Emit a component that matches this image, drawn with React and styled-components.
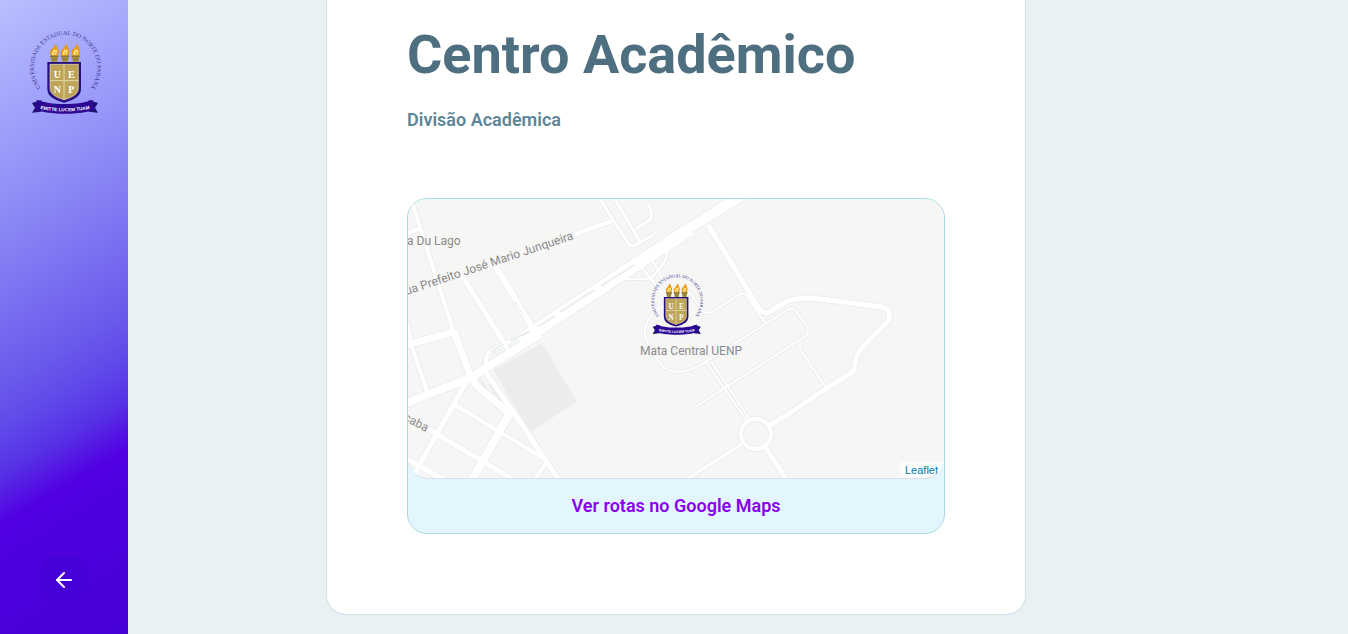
import React from "react";
import styled, { createGlobalStyle } from "styled-components";
import { FiArrowLeft } from "react-icons/fi";

const GlobalStyle = createGlobalStyle`
  * { box-sizing: border-box; margin: 0; padding: 0; }
  body {
    background: #e9f1f4;
    color: #5c8599;
    font-family: Roboto, "Liberation Sans", sans-serif;
    font-weight: 600;
    font-size: 18px;
  }
`;

const Page = styled.div`
  display: grid;
  grid-template-columns: 128px minmax(0, 1fr);
  min-height: 100vh;
`;

const Sidebar = styled.aside`
  display: flex;
  flex-direction: column;
  align-items: center;
  justify-content: space-between;
  padding: 28px 24px 30px;
  background: linear-gradient(
    329.54deg,
    #4600d4 0%,
    #5200e2 26%,
    #5631e5 33%,
    #5f48e9 39%,
    #6b5bec 46%,
    #8e8ef7 71%,
    #babfff 100%
  );
`;

const BackButton = styled.button`
  display: flex;
  align-items: center;
  justify-content: center;
  width: 48px;
  height: 48px;
  border: 0;
  border-radius: 16px;
  background: #4700d6;
  color: #fff;
  cursor: pointer;
`;

const Main = styled.main`
  padding: 0 124px 19px 0;
`;

const Card = styled.article`
  width: 100%;
  max-width: 700px;
  margin: 0 auto;
  padding: 28px 80px 80px;
  background: #fff;
  border: 1px solid #d3e2e5;
  border-top: 0;
  border-radius: 0 0 20px 20px;
`;

const Title = styled.h1`
  color: #4d6f80;
  font-size: 54px;
  line-height: 54px;
  font-weight: 700;
`;

const Description = styled.p`
  margin-top: 24px;
  line-height: 28px;
`;

const MapPanel = styled.section`
  margin-top: 64px;
  background: #e3f6fd;
  border: 1px solid #a9dce4;
  border-radius: 20px;
  overflow: hidden;
`;

const MapView = styled.div`
  position: relative;
  height: 280px;
  overflow: hidden;
  background: #f6f6f5;
  border-bottom: 1px solid #dddff0;
  border-radius: 0 0 20px 20px;
`;

const MapDrawing = styled.svg`
  display: block;
  width: 100%;
  height: 100%;
`;

const Marker = styled.div`
  position: absolute;
  top: 73px;
  left: 50%;
  transform: translateX(-50%);
`;

const Attribution = styled.div`
  position: absolute;
  right: 0;
  bottom: 0;
  padding: 0 6px 0 5px;
  background: rgba(255, 255, 255, 0.7);
  font: 11px/16px "Liberation Sans", Arial, sans-serif;

  a { color: #0078a8; text-decoration: none; }
`;

const MapFooter = styled.footer`
  padding: 16px 0 17px;
  text-align: center;
  line-height: 21px;

  a { color: #8800ee; text-decoration: none; }
`;

const CrestSvg = styled.svg`
  display: block;
  flex: none;
`;

function Crest({ id, width, height }) {
  const torches = [163, 195, 227];
  return (
    <CrestSvg width={width} height={height} viewBox="81 84 222 258" role="img" aria-label="UENP">
      <path id={id} d="M134 276 A95 98 0 1 1 260 276" fill="none" />
      <text fontFamily="Liberation Serif, serif" fontSize="18" fontWeight="400" fill="#3d3892" textAnchor="middle">
        <textPath href={`#${id}`} startOffset="50%">UNIVERSIDADE ESTADUAL DO NORTE DO PARANÁ</textPath>
      </text>
      {torches.map((x) => (
        <g key={x} transform={`translate(${x} 0)`}>
          <path d="M-9 186 L-9 177 L-12 171 L-12 165 H12 V171 L9 177 V186 Z" fill="#a8923f" />
          <path d="M-12 170 H12 M-9 178 H9" stroke="#6f6330" strokeWidth="2" />
          <path d="M-10 166 C-17 154 -8 148 -4 143 C0 139 2 136 2 131 C8 135 8 140 9 144 C15 150 14 159 9 166 Z" fill="#e99a16" />
          <path d="M-6 165 C-10 156 -3 153 0 146 C2 151 4 152 7 148 C9 156 7 161 4 165 Z" fill="#ffe785" />
          <path d="M-2 164 C-3 158 1 157 2 153 C5 158 4 161 1 164 Z" fill="#f2b32b" />
        </g>
      ))}
      <path d="M142 186 H243 V266 C243 287 226 299 192 308 C159 299 142 287 142 266 Z" fill="#27107f" />
      <path d="M150 193 H235 V264 C235 281 221 291 192 299 C164 291 150 281 150 264 Z" fill="#bda458" stroke="#eee3b8" strokeWidth="2" />
      <path d="M192 193 V299 M150 242 H235" stroke="#e6d9a4" strokeWidth="3" />
      <g fill="#fff" fontFamily="Liberation Serif, serif" fontSize="30" fontWeight="700" textAnchor="middle">
        <text x="172" y="234">U</text>
        <text x="214" y="234">E</text>
        <text x="172" y="279">N</text>
        <text x="214" y="279">P</text>
      </g>
      <path d="M96 309 L124 300 L124 335 L96 338 L105 323 Z M294 309 L266 300 L266 335 L294 338 L285 323 Z" fill="#211073" />
      <path d="M111 299 C145 316 242 316 278 299 L284 328 C246 346 145 346 105 328 Z" fill="#2c0794" />
      <path id={`${id}-motto`} d="M108 322 C145 338 244 338 282 322" fill="none" />
      <text fontFamily="Liberation Sans, sans-serif" fontSize="14" fontWeight="700" fill="#fff" textAnchor="middle">
        <textPath href={`#${id}-motto`} startOffset="50%">EMITTE LUCEM TUAM</textPath>
      </text>
    </CrestSvg>
  );
}

const roads = [
  [3, "M600 199 L613 220 L628 243 Q631 247 636 245 L653 235"],
  [3, "M615 199 L640 242"],
  [3, "M648 204 Q654 213 650 220 L635 229"],
  [2, "M667 250 Q667 262 658 270 Q653 279 645 279 L625 279"],
  [2, "M642 268 L660 290"],
  [2, "M653 262 Q657 268 668 292"],
  [2, "M695 407 L806 336 Q809 333 808 328 L795 310 Q793 308 789 309 L707 361 Q675 382 660 363 Q645 344 645 333 Q645 318 660 308 L690 293 L703 311 Q708 315 714 311 L740 294 Q744 292 747 296 L765 323"],
  [2, "M800 342 Q799 348 802 352 L826 388"],
  [2, "M706 362 L747 421"],
  [2, "M711 361 L750 420"],
  [3, "M742 444 L687 479"],
  [5, "M708 225 L760 310 Q764 314 769 312 L786 302 Q792 298 812 298 L882 307 Q893 310 888 321 L860 350 Q857 353 856 360 L853 372 L827 388 L790 413 L770 425"],
  [5, "M766 448 L786 479"],
  [4, "M407 234 L420 228"],
  [4, "M411 199 L454 333"],
  [4, "M573 235 L612 221"],
  [5, "M463 277 L506 346"],
  [6, "M493 262 L533 329"],
  [4, "M404 310 L412 347 L428 394"],
  [7, "M403 346 L454 332"],
  [7, "M454 331 L471 378"],
  [4, "M500 336 L508 350"],
  [4, "M486 366 Q485 356 490 352 L524 334"],
  [7, "M470 377 L480 389 L512 415"],
  [5, "M483 369 L515 414 L558 479"],
  [8, "M510 413 L472 480"],
  [5, "M468 379 L412 478"],
  [4, "M455 405 L545 459"],
  [5, "M425 427 L514 480"],
  [5, "M404 457 L444 480"],
  [4, "M547 462 L534 480"],
  [8, "M404 404 L472 377 L540 334"],
  [13, "M520 341 L690 229"],
  [10, "M680 234 L752 189"],
];

function CampusMap() {
  return (
    <MapDrawing viewBox="408 199 536 279" preserveAspectRatio="xMidYMid slice" aria-hidden="true">
      <path d="M542 343 L577 402 L530 432 L493 370 Z" fill="#ebedec" />
      <g fill="none" stroke="#eaefee" strokeLinejoin="round">
        {roads.map(([w, d]) => <path key={d} d={d} strokeWidth={w + 2} />)}
        <circle cx="756" cy="434" r="15" strokeWidth="6" />
      </g>
      <g fill="none" stroke="#fff" strokeLinejoin="round">
        {roads.map(([w, d]) => <path key={d} d={d} strokeWidth={w} />)}
        <circle cx="756" cy="434" r="15" strokeWidth="4" />
      </g>
      <g fill="none" stroke="#e8edec">
        <path d="M491 352 L504 344 M510 341 L530 331 M537 327 L555 316 M560 312 L594 290 M601 286 L634 265" strokeWidth="2" />
        <path d="M515 301 L523 315" />
        <path d="M479 378 L487 389 M489 384 L500 400" strokeWidth="2" />
      </g>
      <g fill="#8a8a8a" stroke="#f6f6f5" strokeWidth="3" paintOrder="stroke" fontFamily="Roboto, sans-serif" fontSize="12" fontWeight="400">
        <text x="407" y="245">a Du Lago</text>
        <text x="574" y="239" textAnchor="end" transform="rotate(-18.5 574 239)">ua Prefeito José Mario Junqueira</text>
        <text x="426" y="432" textAnchor="end" transform="rotate(28 426 432)">caba</text>
        <text x="691" y="355" textAnchor="middle">Mata Central UENP</text>
      </g>
    </MapDrawing>
  );
}

export default function App() {
  return (
    <>
      <GlobalStyle />
      <Page>
        <Sidebar>
          <Crest id="sidebar-crest" width={74} height={86} />
          <BackButton type="button" aria-label="Voltar">
            <FiArrowLeft size={24} />
          </BackButton>
        </Sidebar>
        <Main>
          <Card>
            <Title>Centro Acadêmico</Title>
            <Description>Divisão Acadêmica</Description>
            <MapPanel>
              <MapView>
                <CampusMap />
                <Marker>
                  <Crest id="marker-crest" width={54} height={63} />
                </Marker>
                <Attribution>
                  <a href="#leaflet">Leaflet</a>
                </Attribution>
              </MapView>
              <MapFooter>
                <a href="#rotas">Ver rotas no Google Maps</a>
              </MapFooter>
            </MapPanel>
          </Card>
        </Main>
      </Page>
    </>
  );
}
